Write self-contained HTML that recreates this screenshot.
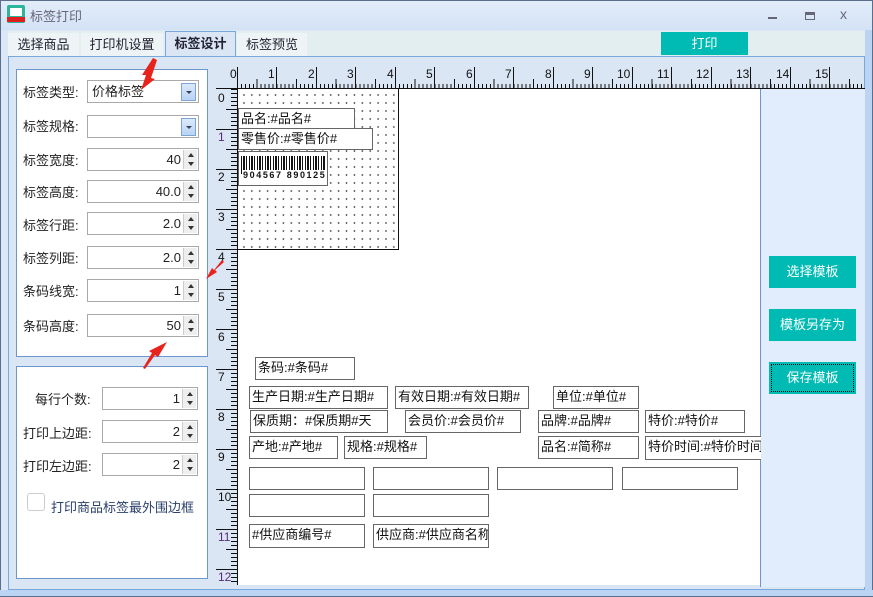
<!DOCTYPE html>
<html><head><meta charset="utf-8"><style>
*{margin:0;padding:0;box-sizing:border-box}
body{width:873px;height:597px;overflow:hidden;font-family:"Liberation Sans","Noto Sans CJK SC",sans-serif;font-size:13px;color:#222;background:#dbe7f6;position:relative}
.a{position:absolute}
.title{left:0;top:0;width:873px;height:30px;background:linear-gradient(#e3edf9,#d3e2f5);border:1px solid #5a6f8c;border-bottom:none}
.tabbar{left:8px;top:31px;width:857px;height:26px;background:#e2eef0}
.tab{top:33px;height:24px;background:#eef4f6;font-size:13px;line-height:24px;text-align:center;color:#223}
.content{left:8px;top:56px;width:857px;height:534px;background:#dbe6f4;border:1px solid #79a9dc}
.panel{background:#fff;border:1px solid #6e95cc}
.lbl{font-size:13px}
.inp{height:23px;background:#fff;border:1px solid #a9a9a9;text-align:right;padding-right:17px;line-height:21px;font-size:13px}
.spin{position:absolute;right:1px;top:1px;width:14px;height:19px;background:#eee;border-left:1px solid #ccc}
.spin:before{content:"";position:absolute;left:4px;top:3px;border:3px solid transparent;border-bottom:4px solid #333;border-top:none}
.spin:after{content:"";position:absolute;left:4px;top:12px;border:3px solid transparent;border-top:4px solid #333;border-bottom:none}
.dd{position:absolute;right:2px;top:2px;width:15px;height:18px;background:linear-gradient(#dbe9fb,#b9d3f5);border:1px solid #7ea4d6}
.dd:after{content:"";position:absolute;left:4px;top:7px;border:3px solid transparent;border-top:3px solid #345;border-bottom:none}
.box{position:absolute;border:1px solid #666;background:#fff;font-size:13px;line-height:20px;padding-left:2px;white-space:nowrap;overflow:hidden;color:#111}
.btn{position:absolute;left:769px;width:87px;height:32px;background:#00bbb3;color:#fff;text-align:center;line-height:32px;font-size:13px}
</style></head><body>
<div class="a title"></div>
<div class="a" style="left:7px;top:5px;width:18px;height:18px;background:#2bb59a;border-radius:2px"></div>
<div class="a" style="left:10px;top:8px;width:12px;height:8px;background:#fff"></div>
<div class="a" style="left:7px;top:17px;width:18px;height:5px;background:#e02020"></div>
<div class="a" style="left:30px;top:6px;font-size:13px;color:#667">标签打印</div>
<div class="a" style="left:768px;top:17px;width:9px;height:2px;background:#667"></div>
<div class="a" style="left:805px;top:12px;width:10px;height:8px;border:1px solid #667;border-top-width:3px"></div>
<div class="a" style="left:840px;top:6px;font-size:14px;color:#667">x</div>
<div class="a" style="left:865px;top:30px;width:8px;height:567px;background:#bcd4f3;border-right:1px solid #5a6f8c"></div>
<div class="a" style="left:0;top:30px;width:8px;height:567px;background:#dbe7f6;border-left:1px solid #5a6f8c"></div>
<div class="a" style="left:0;top:590px;width:873px;height:7px;background:#bcd4f3;border-bottom:1px solid #5a6f8c"></div>
<div class="a tabbar"></div>
<div class="a tab" style="left:8px;width:71px">选择商品</div>
<div class="a tab" style="left:81px;width:82px">打印机设置</div>
<div class="a tab" style="left:165px;top:31px;height:27px;width:71px;background:#dbe6f4;border:1px solid #79a9dc;border-bottom:none;font-weight:bold;line-height:24px">标签设计</div>
<div class="a tab" style="left:237px;width:70px">标签预览</div>
<div class="a" style="left:661px;top:32px;width:87px;height:23px;background:#00bbb3;color:#fff;text-align:center;line-height:23px">打印</div>
<div class="a content"></div>

<div class="a panel" style="left:16px;top:69px;width:192px;height:288px"></div>
<div class="a lbl" style="left:23px;top:82px">标签类型:</div>
<div class="a inp" style="left:87px;top:80px;width:112px;text-align:left;padding-left:4px">价格标签<div class="dd"></div></div>
<div class="a lbl" style="left:23px;top:116px">标签规格:</div>
<div class="a inp" style="left:87px;top:115px;width:112px"><div class="dd"></div></div>
<div class="a lbl" style="left:23px;top:150px">标签宽度:</div>
<div class="a inp" style="left:87px;top:148px;width:112px">40<div class="spin"></div></div>
<div class="a lbl" style="left:23px;top:182px">标签高度:</div>
<div class="a inp" style="left:87px;top:180px;width:112px">40.0<div class="spin"></div></div>
<div class="a lbl" style="left:23px;top:215px">标签行距:</div>
<div class="a inp" style="left:87px;top:212px;width:112px">2.0<div class="spin"></div></div>
<div class="a lbl" style="left:23px;top:248px">标签列距:</div>
<div class="a inp" style="left:87px;top:246px;width:112px">2.0<div class="spin"></div></div>
<div class="a lbl" style="left:23px;top:281px">条码线宽:</div>
<div class="a inp" style="left:87px;top:279px;width:112px">1<div class="spin"></div></div>
<div class="a lbl" style="left:23px;top:316px">条码高度:</div>
<div class="a inp" style="left:87px;top:314px;width:112px">50<div class="spin"></div></div>

<div class="a panel" style="left:16px;top:366px;width:192px;height:213px"></div>
<div class="a lbl" style="left:35px;top:389px">每行个数:</div>
<div class="a inp" style="left:102px;top:387px;width:96px">1<div class="spin"></div></div>
<div class="a lbl" style="left:23px;top:423px">打印上边距:</div>
<div class="a inp" style="left:102px;top:420px;width:96px">2<div class="spin"></div></div>
<div class="a lbl" style="left:23px;top:456px">打印左边距:</div>
<div class="a inp" style="left:102px;top:453px;width:96px">2<div class="spin"></div></div>
<div class="a" style="left:27px;top:493px;width:18px;height:18px;border:1px solid #ccc;border-radius:3px;background:#fff"></div>
<div class="a" style="left:51px;top:497px;color:#2a3f6a">打印商品标签最外围边框</div>

<div class="a" style="left:237px;top:84px;width:628px;height:5px;background:repeating-linear-gradient(90deg,#111 0 1px,transparent 1px 3.95px)"></div>
<div class="a" style="left:237px;top:79px;width:628px;height:10px;background:repeating-linear-gradient(90deg,transparent 0 19.75px,#111 19.75px 20.75px,transparent 20.75px 39.5px)"></div>
<div class="a" style="left:216px;top:88px;width:649px;height:1px;background:#111"></div>
<div class="a" style="left:231px;top:89px;width:6px;height:496px;background:repeating-linear-gradient(180deg,#111 0 1px,transparent 1px 4px)"></div>
<div class="a" style="left:226px;top:89px;width:11px;height:496px;background:repeating-linear-gradient(180deg,transparent 0 20px,#111 20px 21px,transparent 21px 40px)"></div>
<div class="a" style="left:237px;top:89px;width:523px;height:496px;background:#fff;border-left:1px solid #111"></div>
<div class="a" style="left:760px;top:89px;width:105px;height:498px;background:#e1ecfc;border-left:1px solid #6e95cc"></div>

<div class="a" style="left:238px;top:89px;width:161px;height:161px;border:1px solid #111;border-left:none;border-top:none;background-color:#fff;background-image:radial-gradient(circle,#333 0.7px,transparent 0.9px);background-size:7.9px 8px;background-position:2px 2px"></div>
<div class="box" style="left:238px;top:108px;width:117px;height:21px">品名:#品名#</div>
<div class="box" style="left:238px;top:128px;width:135px;height:22px">零售价:#零售价#</div>
<div class="box" style="left:238px;top:151px;width:90px;height:35px;padding:0">
<div class="a" style="left:2px;top:4px;width:84px;height:18px;background:repeating-linear-gradient(90deg,#111 0 1px,#fff 1px 2px,#111 2px 4px,#fff 4px 5px,#111 5px 6px,#fff 6px 8px)"></div>
<div class="a" style="left:4px;top:18px;width:82px;background:#fff;font-size:9px;font-weight:bold;line-height:11px;letter-spacing:1.6px">904567 890125</div></div>

<div class="box" style="left:255px;top:357px;width:100px;height:23px">条码:#条码#</div>
<div class="box" style="left:249px;top:386px;width:139px;height:23px">生产日期:#生产日期#</div>
<div class="box" style="left:395px;top:386px;width:134px;height:23px">有效日期:#有效日期#</div>
<div class="box" style="left:553px;top:386px;width:86px;height:23px">单位:#单位#</div>
<div class="box" style="left:250px;top:410px;width:138px;height:23px">保质期：#保质期#天</div>
<div class="box" style="left:405px;top:410px;width:116px;height:23px">会员价:#会员价#</div>
<div class="box" style="left:538px;top:410px;width:101px;height:23px">品牌:#品牌#</div>
<div class="box" style="left:645px;top:410px;width:100px;height:23px">特价:#特价#</div>
<div class="box" style="left:249px;top:436px;width:89px;height:23px">产地:#产地#</div>
<div class="box" style="left:344px;top:436px;width:83px;height:23px">规格:#规格#</div>
<div class="box" style="left:538px;top:436px;width:101px;height:23px">品名:#简称#</div>
<div class="box" style="left:645px;top:436px;width:116px;height:24px;border-right:none">特价时间:#特价时间#</div>
<div class="box" style="left:249px;top:467px;width:116px;height:23px"></div>
<div class="box" style="left:373px;top:467px;width:116px;height:23px"></div>
<div class="box" style="left:497px;top:467px;width:116px;height:23px"></div>
<div class="box" style="left:622px;top:467px;width:116px;height:23px"></div>
<div class="box" style="left:249px;top:494px;width:116px;height:23px"></div>
<div class="box" style="left:373px;top:494px;width:116px;height:23px"></div>
<div class="box" style="left:249px;top:524px;width:116px;height:24px">#供应商编号#</div>
<div class="box" style="left:373px;top:524px;width:116px;height:24px">供应商:#供应商名称#</div>

<div class="btn" style="top:256px">选择模板</div>
<div class="btn" style="top:309px">模板另存为</div>
<div class="btn" style="top:362px;outline:1px dotted #000;outline-offset:-3px">保存模板</div>

<svg class="a" style="left:0;top:0" width="873" height="597">
<g stroke="#111" stroke-width="1">
<line x1="237.5" y1="67" x2="237.5" y2="89"/><line x1="276.5" y1="67" x2="276.5" y2="89"/><line x1="316.5" y1="67" x2="316.5" y2="89"/><line x1="355.5" y1="67" x2="355.5" y2="89"/><line x1="395.5" y1="67" x2="395.5" y2="89"/><line x1="434.5" y1="67" x2="434.5" y2="89"/><line x1="474.5" y1="67" x2="474.5" y2="89"/><line x1="513.5" y1="67" x2="513.5" y2="89"/><line x1="553.5" y1="67" x2="553.5" y2="89"/><line x1="592.5" y1="67" x2="592.5" y2="89"/><line x1="632.5" y1="67" x2="632.5" y2="89"/><line x1="671.5" y1="67" x2="671.5" y2="89"/><line x1="711.5" y1="67" x2="711.5" y2="89"/><line x1="750.5" y1="67" x2="750.5" y2="89"/><line x1="790.5" y1="67" x2="790.5" y2="89"/><line x1="829.5" y1="67" x2="829.5" y2="89"/>
<line x1="216" y1="129.5" x2="237" y2="129.5"/><line x1="216" y1="169.5" x2="237" y2="169.5"/><line x1="216" y1="209.5" x2="237" y2="209.5"/><line x1="216" y1="249.5" x2="237" y2="249.5"/><line x1="216" y1="289.5" x2="237" y2="289.5"/><line x1="216" y1="329.5" x2="237" y2="329.5"/><line x1="216" y1="369.5" x2="237" y2="369.5"/><line x1="216" y1="409.5" x2="237" y2="409.5"/><line x1="216" y1="449.5" x2="237" y2="449.5"/><line x1="216" y1="489.5" x2="237" y2="489.5"/><line x1="216" y1="529.5" x2="237" y2="529.5"/><line x1="216" y1="569.5" x2="237" y2="569.5"/>
</g>
<g font-family="Liberation Sans" font-size="12" fill="#111">
<text x="230" y="78">0</text><text x="268" y="78">1</text><text x="308" y="78">2</text><text x="347" y="78">3</text><text x="387" y="78">4</text><text x="426" y="78">5</text><text x="466" y="78">6</text><text x="505" y="78">7</text><text x="545" y="78">8</text><text x="584" y="78">9</text><text x="617" y="78">10</text><text x="657" y="78">11</text><text x="696" y="78">12</text><text x="736" y="78">13</text><text x="776" y="78">14</text><text x="815" y="78">15</text>
<text x="218" y="102">0</text><text x="218" y="141" fill="#5a2a7a">1</text><text x="218" y="181">2</text><text x="218" y="221">3</text><text x="218" y="261">4</text><text x="218" y="301">5</text><text x="218" y="341">6</text><text x="218" y="381">7</text><text x="218" y="421">8</text><text x="218" y="461">9</text><text x="218" y="501">10</text><text x="218" y="541" fill="#5a2a7a">11</text><text x="218" y="581" fill="#5a2a7a">12</text>
</g>
<g fill="#e8231b">
<polygon points="157,60 151,78 155,79 141,90 146,75 142,75 153,58"/>
<polygon points="224,262 215,270 217,272 206,279 212,268 214,270 222,260"/>
<polygon points="143,368 152,353 149,351 167,342 158,357 155,355 145,369"/>
</g>
</svg>
</body></html>
